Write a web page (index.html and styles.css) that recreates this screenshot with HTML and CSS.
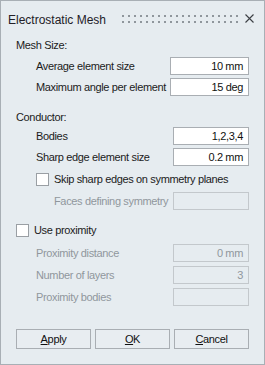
FILE: index.html
```html
<!DOCTYPE html>
<html>
<head>
<meta charset="utf-8">
<link rel="stylesheet" href="styles.css">
</head>
<body>
<div class="dialog">
  <div class="titlebar">
    <span class="title">Electrostatic Mesh</span>
    <svg class="grip" width="116" height="8" viewBox="0 0 116 8">
      <defs>
        <pattern id="dots" width="6" height="6" patternUnits="userSpaceOnUse">
          <rect x="0" y="0" width="2" height="2" fill="#8f969c"/>
        </pattern>
      </defs>
      <rect x="0" y="0" width="116" height="8" fill="url(#dots)"/>
    </svg>
    <svg class="close" width="9" height="9" viewBox="0 0 9 9">
      <path d="M0.5 0.5 L8.5 8.5 M8.5 0.5 L0.5 8.5" stroke="#3c4044" stroke-width="1.1" fill="none"/>
    </svg>
  </div>
  <div class="content">
    <div class="section">Mesh Size:</div>
    <div class="row indent gap-2"><span class="label">Average element size</span><div class="field wide">10 mm</div></div>
    <div class="row indent gap-3"><span class="label">Maximum angle per element</span><div class="field wide">15 deg</div></div>

    <div class="section gap-10">Conductor:</div>
    <div class="row indent"><span class="label">Bodies</span><div class="field">1,2,3,4</div></div>
    <div class="row indent gap-3"><span class="label">Sharp edge element size</span><div class="field">0.2 mm</div></div>
    <div class="row indent gap-4"><span class="check"></span><span class="label">Skip sharp edges on symmetry planes</span></div>
    <div class="row indent2 gap-4 disabled"><span class="label">Faces defining symmetry</span><div class="field"></div></div>

    <div class="row gap-11"><span class="check"></span><span class="label">Use proximity</span></div>
    <div class="row indent gap-5 disabled"><span class="label">Proximity distance</span><div class="field">0 mm</div></div>
    <div class="row indent gap-4 disabled"><span class="label">Number of layers</span><div class="field">3</div></div>
    <div class="row indent gap-4 disabled"><span class="label">Proximity bodies</span><div class="field"></div></div>

    <div class="buttons">
      <div class="btn"><u>A</u>pply</div>
      <div class="btn"><u>O</u>K</div>
      <div class="btn"><u>C</u>ancel</div>
    </div>
  </div>
</div>
</body>
</html>
```

FILE: styles.css
```css
html, body {
  margin: 0;
  padding: 0;
  background: #e6ecf0;
}

.dialog {
  box-sizing: border-box;
  width: 265px;
  height: 365px;
  border: 1px solid #a8afb5;
  background: #e6ecf0;
  font-family: "Liberation Sans", Arial, sans-serif;
  font-size: 11px;
  letter-spacing: -0.35px;
  color: #1b1b1b;
}

.titlebar {
  box-sizing: border-box;
  height: 33px;
  padding: 5px 10px 0 7px;
  display: flex;
  align-items: center;
}

.title {
  font-size: 12px;
  letter-spacing: 0;
  color: #232027;
}

.grip {
  display: block;
  margin-left: auto;
  margin-right: 7px;
  margin-top: -2px;
}

.close {
  display: block;
  margin-top: -3px;
}

.content {
  padding: 0 15px;
}

.section {
  height: 21px;
  display: flex;
  align-items: center;
}

.row {
  height: 18px;
  display: flex;
  align-items: center;
}

.indent { padding-left: 20px; }
.indent2 { padding-left: 38px; }

.gap-2 { margin-top: 2px; }
.gap-3 { margin-top: 3px; }
.gap-4 { margin-top: 4px; }
.gap-5 { margin-top: 5px; }
.gap-10 { margin-top: 10px; }
.gap-11 { margin-top: 11px; }

.label {
  flex: 1;
  white-space: nowrap;
}

.field {
  box-sizing: border-box;
  width: 76px;
  height: 18px;
  border: 1px solid #a9aeb3;
  background: #ffffff;
  text-align: right;
  padding-right: 5px;
  line-height: 16px;
  color: #111;
}

.field.wide {
  width: 79px;
}

.disabled .label {
  color: #90979d;
}

.disabled .field {
  background: transparent;
  border-color: #c3c8cc;
  color: #90979d;
}

.check {
  box-sizing: border-box;
  width: 13px;
  height: 13px;
  border: 1px solid #9a9fa4;
  background: #ffffff;
  margin-right: 5px;
  flex: none;
}

.buttons {
  margin-top: 23px;
  display: flex;
  gap: 4px;
}

.btn {
  box-sizing: border-box;
  width: 75px;
  height: 20px;
  border: 1px solid #a9aeb3;
  background: #e8edf1;
  text-align: center;
  line-height: 18px;
  color: #111;
}

.btn u {
  text-decoration: underline;
  text-underline-offset: 1px;
}
```
